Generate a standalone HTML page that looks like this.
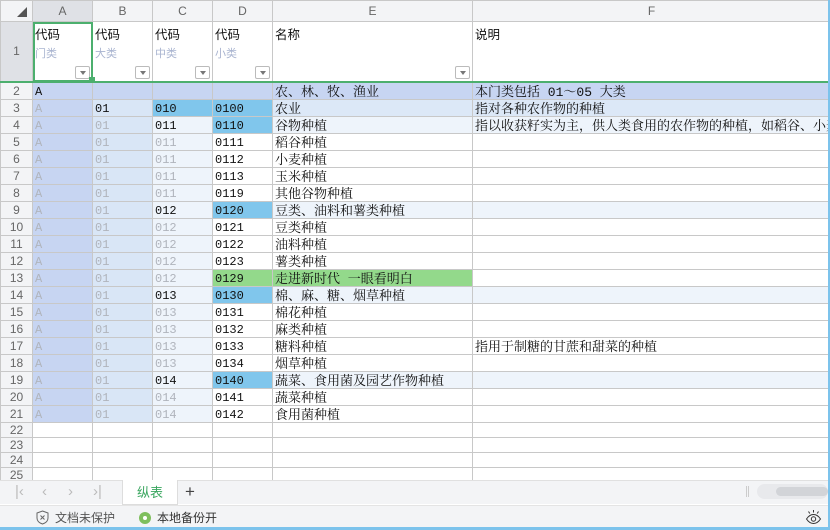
<!DOCTYPE html><html><head><meta charset="utf-8"><style>
*{margin:0;padding:0;box-sizing:border-box}
body{width:830px;height:530px;overflow:hidden;background:#7cc3ec;font-family:"Liberation Sans","Noto Sans CJK SC",sans-serif}
#w{position:absolute;left:0;top:0;width:828px;height:527px;background:#fff;overflow:hidden}
table{border-collapse:collapse;table-layout:fixed;position:absolute;left:0;top:0;width:830px}
td{border:1px solid #c8c8c8;font-size:12px;white-space:nowrap;overflow:hidden;padding:0 2px;vertical-align:middle;font-family:"Liberation Mono","Noto Serif CJK SC",monospace;color:#111}
tr.r td:nth-child(6),tr.r td:nth-child(7){font-size:13px}
td.h{background:#f3f4f6;color:#666;text-align:center;font-family:"Liberation Sans",sans-serif;font-size:12px;padding:0}
td.hs{background:#dfe1e6}
tr.r td{height:17px;line-height:13px;padding-top:3px;vertical-align:top}
tr.r td.h{padding-top:2px}
tr.e td{height:14px}
.A{background:#c7d5f2}.B{background:#d9e6f6}.C{background:#eef4fb}
.g{color:#b0b4bc}.bl{background:#80c6ec}.gr{background:#93d98b}
.rb{background:#dce8f7}.rl{background:#eef4fb}
td.t{vertical-align:top;font-family:"Noto Sans CJK SC",sans-serif;font-size:12.5px;position:relative;padding-top:2px}
.sub{color:#a9b4d0;font-size:11px;display:block;margin-top:2px}
.dd{position:absolute;right:2px;bottom:2px;width:15px;height:13px;border:1px solid #bbb;background:#fff;border-radius:2px}
.dd:after{content:"";position:absolute;left:4px;top:4px;border:3px solid transparent;border-top:4px solid #777}
</style></head><body><div id="w">
<table>
<colgroup><col style="width:32px"><col style="width:60px"><col style="width:60px"><col style="width:60px"><col style="width:60px"><col style="width:200px"><col style="width:358px"></colgroup>
<tr style="height:21px"><td class="h" style="position:relative"><span style="position:absolute;right:5px;bottom:4px;border-left:10px solid transparent;border-bottom:10px solid #555"></span></td><td class="h hs">A</td><td class="h">B</td><td class="h">C</td><td class="h">D</td><td class="h">E</td><td class="h">F</td></tr>
<tr style="height:60px"><td class="h hs">1</td>
<td class="t" style="outline:2px solid #4caf6e;outline-offset:-2px">代码<span class="sub">门类</span><span class="dd"></span></td>
<td class="t">代码<span class="sub">大类</span><span class="dd"></span></td>
<td class="t">代码<span class="sub">中类</span><span class="dd"></span></td>
<td class="t">代码<span class="sub">小类</span><span class="dd"></span></td>
<td class="t">名称<span class="dd"></span></td>
<td class="t">说明</td></tr>
<tr class="r" style="border-top:2px solid #4caf6e"><td class="h">2</td><td class="A">A</td><td class="A"></td><td class="A"></td><td class="A"></td><td class="A">农、林、牧、渔业</td><td class="A">本门类包括 01～05 大类</td></tr>
<tr class="r"><td class="h">3</td><td class="A g">A</td><td class="B">01</td><td class="bl">010</td><td class="bl">0100</td><td class="rb">农业</td><td class="rb">指对各种农作物的种植</td></tr>
<tr class="r"><td class="h">4</td><td class="A g">A</td><td class="B g">01</td><td class="C">011</td><td class="bl">0110</td><td class="rl">谷物种植</td><td class="rl">指以收获籽实为主，供人类食用的农作物的种植，如稻谷、小麦、玉米</td></tr>
<tr class="r"><td class="h">5</td><td class="A g">A</td><td class="B g">01</td><td class="C g">011</td><td>0111</td><td>稻谷种植</td><td></td></tr>
<tr class="r"><td class="h">6</td><td class="A g">A</td><td class="B g">01</td><td class="C g">011</td><td>0112</td><td>小麦种植</td><td></td></tr>
<tr class="r"><td class="h">7</td><td class="A g">A</td><td class="B g">01</td><td class="C g">011</td><td>0113</td><td>玉米种植</td><td></td></tr>
<tr class="r"><td class="h">8</td><td class="A g">A</td><td class="B g">01</td><td class="C g">011</td><td>0119</td><td>其他谷物种植</td><td></td></tr>
<tr class="r"><td class="h">9</td><td class="A g">A</td><td class="B g">01</td><td class="C">012</td><td class="bl">0120</td><td class="rl">豆类、油料和薯类种植</td><td class="rl"></td></tr>
<tr class="r"><td class="h">10</td><td class="A g">A</td><td class="B g">01</td><td class="C g">012</td><td>0121</td><td>豆类种植</td><td></td></tr>
<tr class="r"><td class="h">11</td><td class="A g">A</td><td class="B g">01</td><td class="C g">012</td><td>0122</td><td>油料种植</td><td></td></tr>
<tr class="r"><td class="h">12</td><td class="A g">A</td><td class="B g">01</td><td class="C g">012</td><td>0123</td><td>薯类种植</td><td></td></tr>
<tr class="r"><td class="h">13</td><td class="A g">A</td><td class="B g">01</td><td class="C g">012</td><td class="gr">0129</td><td class="gr">走进新时代 一眼看明白</td><td></td></tr>
<tr class="r"><td class="h">14</td><td class="A g">A</td><td class="B g">01</td><td class="C">013</td><td class="bl">0130</td><td class="rl">棉、麻、糖、烟草种植</td><td class="rl"></td></tr>
<tr class="r"><td class="h">15</td><td class="A g">A</td><td class="B g">01</td><td class="C g">013</td><td>0131</td><td>棉花种植</td><td></td></tr>
<tr class="r"><td class="h">16</td><td class="A g">A</td><td class="B g">01</td><td class="C g">013</td><td>0132</td><td>麻类种植</td><td></td></tr>
<tr class="r"><td class="h">17</td><td class="A g">A</td><td class="B g">01</td><td class="C g">013</td><td>0133</td><td>糖料种植</td><td>指用于制糖的甘蔗和甜菜的种植</td></tr>
<tr class="r"><td class="h">18</td><td class="A g">A</td><td class="B g">01</td><td class="C g">013</td><td>0134</td><td>烟草种植</td><td></td></tr>
<tr class="r"><td class="h">19</td><td class="A g">A</td><td class="B g">01</td><td class="C">014</td><td class="bl">0140</td><td class="rl">蔬菜、食用菌及园艺作物种植</td><td class="rl"></td></tr>
<tr class="r"><td class="h">20</td><td class="A g">A</td><td class="B g">01</td><td class="C g">014</td><td>0141</td><td>蔬菜种植</td><td></td></tr>
<tr class="r"><td class="h">21</td><td class="A g">A</td><td class="B g">01</td><td class="C g">014</td><td>0142</td><td>食用菌种植</td><td></td></tr>
<tr class="e"><td class="h">22</td><td></td><td></td><td></td><td></td><td></td><td></td></tr>
<tr class="e"><td class="h">23</td><td></td><td></td><td></td><td></td><td></td><td></td></tr>
<tr class="e"><td class="h">24</td><td></td><td></td><td></td><td></td><td></td><td></td></tr>
<tr class="e"><td class="h">25</td><td></td><td></td><td></td><td></td><td></td><td></td></tr>
<tr class="e"><td class="h">26</td><td></td><td></td><td></td><td></td><td></td><td></td></tr>
</table>
<div style="position:absolute;left:89px;top:77px;width:6px;height:6px;background:#4caf6e"></div>
<div style="position:absolute;left:0;top:480px;width:828px;height:24px;background:#f3f4f6;border-top:1px solid #e0e0e0;font-size:15px;color:#bbb">
<span style="position:absolute;left:15px;top:2px">|‹</span><span style="position:absolute;left:42px;top:2px">‹</span><span style="position:absolute;left:68px;top:2px">›</span><span style="position:absolute;left:93px;top:2px">›|</span>
<div style="position:absolute;left:122px;top:-1px;width:56px;height:25px;background:#fff;border:1px solid #ddd;border-top:none;color:#3aa65f;font-size:13px;text-align:center;line-height:24px;font-family:'Noto Sans CJK SC',sans-serif">纵表</div>
<span style="position:absolute;left:185px;top:1px;color:#444;font-size:17px">+</span>
<span style="position:absolute;left:746px;top:5px;width:3px;height:11px;border-left:1px solid #ccc;border-right:1px solid #ccc"></span>
<div style="position:absolute;left:757px;top:3px;width:71px;height:15px;background:#e8e9ec;border-radius:8px"></div>
<div style="position:absolute;left:776px;top:6px;width:52px;height:9px;background:#d2d4d8;border-radius:5px"></div>
</div>
<div style="position:absolute;left:0;top:505px;width:828px;height:22px;background:#f3f4f6;border-top:1px solid #e4e4e4;font-size:12px;color:#333;font-family:'Noto Sans CJK SC',sans-serif">
<svg style="position:absolute;left:36px;top:4px" width="13" height="15" viewBox="0 0 13 15"><path d="M6.5 1L12 3v5c0 3-2.5 5-5.5 6C3.5 13 1 11 1 8V3z" fill="none" stroke="#666"/><path d="M4.5 5.5l4 4M8.5 5.5l-4 4" stroke="#666"/></svg>
<span style="position:absolute;left:55px;top:3px;color:#555">文档未保护</span>
<span style="position:absolute;left:139px;top:6px;width:12px;height:12px;border-radius:50%;background:#7fbf5e"></span><span style="position:absolute;left:143px;top:10px;width:4px;height:4px;border-radius:50%;background:#fff"></span>
<span style="position:absolute;left:157px;top:3px">本地备份开</span>
<svg style="position:absolute;left:805px;top:3px" width="17" height="16" viewBox="0 0 17 16"><path d="M1.5 10c2-3 4-4.5 7-4.5s5 1.5 7 4.5c-2 3-4 4.5-7 4.5s-5-1.5-7-4.5z" fill="none" stroke="#333"/><circle cx="8.5" cy="10" r="2.2" fill="none" stroke="#333"/><path d="M8.5 1v2.5M3.5 2.5l1.3 2M13.5 2.5l-1.3 2" stroke="#333"/></svg>
</div>
</div></body></html>
